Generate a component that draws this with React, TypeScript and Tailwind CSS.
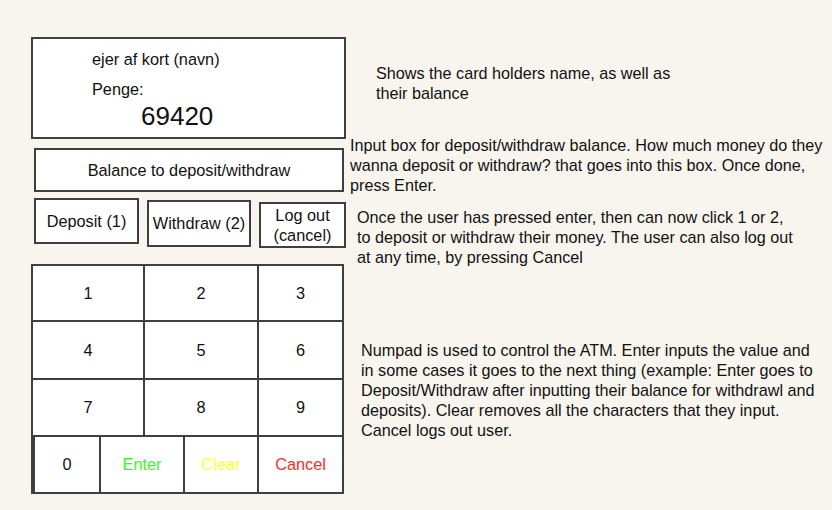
import React from "react";

const font = { fontFamily: '"Liberation Sans", Arial, sans-serif' };

const Cell = ({
  label,
  className = "",
}: {
  label: string;
  className?: string;
}) => (
  <div
    className={`flex items-center justify-center border-r-2 border-b-2 border-[#3f3f3f] ${className}`}
  >
    {label}
  </div>
);

const App = () => {
  const rows = [
    ["1", "2", "3"],
    ["4", "5", "6"],
    ["7", "8", "9"],
  ];
  const heights = ["h-[56px]", "h-[58px]", "h-[57px]"];

  return (
    <div
      className="w-[832px] h-[510px] bg-[#f8f5ef] text-[#111] text-[16.3px] flex overflow-hidden"
      style={font}
    >
      {/* left: the ATM mockup */}
      <div className="w-[346px] shrink-0 pl-[31px] pt-[37px]">
        <div className="w-[315px] h-[102px] bg-white border-2 border-[#3f3f3f] pl-[59px] pt-[11px]">
          <div className="leading-[18px]">ejer af kort (navn)</div>
          <div className="leading-[18px] mt-[12px]">Penge:</div>
          <div className="text-[26px] leading-[28px] mt-[4px] pl-[49px]">
            69420
          </div>
        </div>

        <div className="ml-[3px] mt-[9px] w-[310px] h-[44px] bg-white border-2 border-[#3f3f3f] flex items-center justify-center">
          Balance to deposit/withdraw
        </div>

        <div className="flex items-start mt-[6px] ml-[3px]">
          <div className="w-[105px] h-[46px] bg-white border-2 border-[#3f3f3f] flex items-center justify-center">
            Deposit (1)
          </div>
          <div className="ml-[8px] mt-[2px] w-[104px] h-[47px] bg-white border-2 border-[#3f3f3f] flex items-center justify-center">
            Withdraw (2)
          </div>
          <div className="ml-[8px] mt-[4px] w-[87px] h-[46px] bg-white border-2 border-[#3f3f3f] flex flex-col items-center justify-center leading-[20px]">
            <span>Log out</span>
            <span>(cancel)</span>
          </div>
        </div>

        <div className="mt-[16px] w-[313px] bg-white border-l-2 border-t-2 border-[#3f3f3f]">
          {rows.map((r, i) => (
            <div key={i} className={`flex ${heights[i]}`}>
              <Cell label={r[0]} className="w-[112px]" />
              <Cell label={r[1]} className="w-[114px]" />
              <Cell label={r[2]} className="flex-1" />
            </div>
          ))}
          <div className="flex h-[57px] border-l-2 border-[#3f3f3f]">
            <Cell label="0" className="w-[66px]" />
            <Cell label="Enter" className="w-[84px] text-[#2cff2c]" />
            <Cell label="Clear" className="w-[74px] text-[#ffff2e]" />
            <Cell label="Cancel" className="flex-1 text-[#ff2b2b]" />
          </div>
        </div>
      </div>

      {/* right: notes */}
      <div className="flex flex-col text-[16.2px] leading-[20px] whitespace-nowrap">
        <p className="pl-[30px] mt-[63px]">
          Shows the card holders name, as well as
          <br />
          their balance
        </p>
        <p className="pl-[4px] mt-[32px]">
          Input box for deposit/withdraw balance. How much money do they
          <br />
          wanna deposit or withdraw? that goes into this box. Once done,
          <br />
          press Enter.
        </p>
        <p className="pl-[11px] mt-[12px]">
          Once the user has pressed enter, then can now click 1 or 2,
          <br />
          to deposit or withdraw their money. The user can also log out
          <br />
          at any time, by pressing Cancel
        </p>
        <p className="pl-[15px] mt-[73px]">
          Numpad is used to control the ATM. Enter inputs the value and
          <br />
          in some cases it goes to the next thing (example: Enter goes to
          <br />
          Deposit/Withdraw after inputting their balance for withdrawl and
          <br />
          deposits). Clear removes all the characters that they input.
          <br />
          Cancel logs out user.
        </p>
      </div>
    </div>
  );
};

export default App;
